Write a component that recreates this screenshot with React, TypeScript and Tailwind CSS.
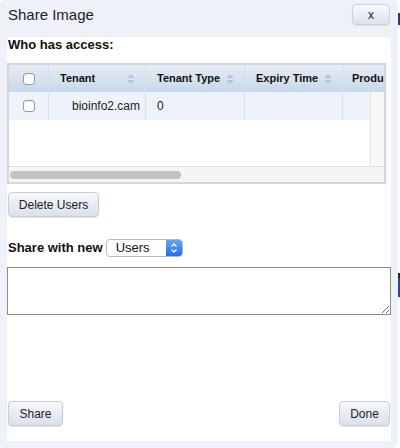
import React from 'react'

const COLUMNS = [
  { label: 'Tenant', width: 'w-[97px]', sort: true },
  { label: 'Tenant Type', width: 'w-[99px]', sort: true },
  { label: 'Expiry Time', width: 'w-[98px]', sort: true },
]

function SortIcon() {
  return (
    <svg width="8" height="10" viewBox="0 0 8 10" className="shrink-0">
      <path d="M4 0 L8 4 L0 4 Z" fill="#b9c5d2" />
      <path d="M0 6 L8 6 L4 10 Z" fill="#b9c5d2" />
    </svg>
  )
}

function Checkbox() {
  return <div className="w-[12px] h-[12px] rounded-[3px] border border-[#9a9a9a] bg-white shadow-[inset_0_1px_1px_rgba(0,0,0,0.08)]" />
}

function Btn({ children, className }: { children: React.ReactNode; className: string }) {
  return (
    <button
      className={
        'h-[25px] rounded-[4px] border border-[#c3cddb] bg-gradient-to-b from-[#f6f8fb] to-[#d9e1ec] text-[12px] text-[#222] shadow-[0_1px_1px_rgba(0,0,0,0.12)] flex items-center justify-center ' +
        className
      }
    >
      {children}
    </button>
  )
}

export default function App() {
  return (
    <div className="w-[400px] h-[448px] flex bg-white overflow-hidden" style={{ fontFamily: '"Liberation Sans", Arial, sans-serif' }}>
      <div className="w-[397px] h-[448px] bg-[#eef2f8] rounded-[4px] flex flex-col">
        {/* Header */}
        <div className="h-[37px] flex items-start pl-[8px] pr-[7px]">
          <div className="pt-[6px] text-[15px] leading-[18px] text-[#222]">Share Image</div>
          <button className="ml-auto mt-[4px] w-[38px] h-[21px] rounded-[4px] border border-[#c8d1de] bg-gradient-to-b from-[#f7f9fc] to-[#dde4ee] text-[12px] text-[#222] flex items-center justify-center shadow-[0_1px_1px_rgba(0,0,0,0.08)]">
            x
          </button>
        </div>

        {/* Content */}
        <div className="ml-[7px] w-[384px] h-[404px] bg-white flex flex-col">
          <div className="pl-[1px] text-[13px] leading-[16px] font-bold text-[#111]">Who has access:</div>

          {/* Grid */}
          <div className="mt-[10px] w-[379px] h-[121px] border-2 border-[#d6d6d6] flex flex-col">
            <div className="h-[27px] flex bg-gradient-to-b from-[#e6edf6] to-[#c6d8ea] overflow-hidden">
              <div className="w-[40px] shrink-0 flex items-center justify-center border-r border-[#d3dfec]">
                <Checkbox />
              </div>
              {COLUMNS.map((c) => (
                <div
                  key={c.label}
                  className={c.width + ' shrink-0 flex items-center pl-[11px] pr-[10px] border-r border-[#d3dfec] text-[11px] font-bold text-[#111] whitespace-nowrap'}
                >
                  <span>{c.label}</span>
                  {c.sort && (
                    <span className="ml-auto">
                      <SortIcon />
                    </span>
                  )}
                </div>
              ))}
              <div className="flex-1 flex items-center pl-[9px] text-[11px] font-bold text-[#111] whitespace-nowrap">Produ</div>
            </div>
            <div className="flex h-[74px]">
              <div className="w-[361px]">
                <div className="h-[28px] flex bg-[#eef3f9]">
                  <div className="w-[40px] shrink-0 flex items-center justify-center border-r border-[#d6e2ef]">
                    <Checkbox />
                  </div>
                  <div className="w-[97px] shrink-0 flex items-center pl-[23px] border-r border-[#d6e2ef] text-[12px] text-[#222]">bioinfo2.cam</div>
                  <div className="w-[99px] shrink-0 flex items-center pl-[11px] border-r border-[#d6e2ef] text-[12px] text-[#222]">0</div>
                  <div className="w-[98px] shrink-0 border-r border-[#d6e2ef]" />
                  <div className="flex-1" />
                </div>
              </div>
              <div className="w-[14px] bg-[#f7f7f7] border-l border-[#e4e4e4]" />
            </div>
            <div className="flex-1 bg-[#f5f5f5] border-t border-[#e2e2e2] flex items-center pl-[1px]">
              <div className="w-[171px] h-[8px] rounded-full bg-[#c1c1c1]" />
            </div>
          </div>

          <Btn className="mt-[8px] ml-[1px] w-[91px]">Delete Users</Btn>

          <div className="mt-[21px] ml-[1px] flex items-center h-[19px]">
            <span className="text-[13px] font-bold text-[#111]">Share with new</span>
            <div className="ml-[3px] w-[77px] h-[18px] rounded-[4px] border border-[#b9b9b9] bg-white flex items-center overflow-hidden">
              <span className="pl-[9px] text-[13px] text-[#111]">Users</span>
              <div className="ml-auto w-[16px] h-full bg-gradient-to-b from-[#5ea6fa] to-[#1c6ff0] flex items-center justify-center">
                <svg width="8" height="12" viewBox="0 0 8 12">
                  <path d="M1.5 4.5 L4 2 L6.5 4.5" stroke="white" strokeWidth="1.3" fill="none" />
                  <path d="M1.5 7.5 L4 10 L6.5 7.5" stroke="white" strokeWidth="1.3" fill="none" />
                </svg>
              </div>
            </div>
          </div>

          <textarea className="mt-[10px] w-[384px] h-[48px] border border-[#8d8d8d] bg-white outline-none" />

          <div className="mt-auto mb-[15px] flex justify-between pl-[1px] pr-[1px]">
            <Btn className="w-[55px]">Share</Btn>
            <Btn className="w-[51px]">Done</Btn>
          </div>
        </div>
      </div>

      {/* Edge of page behind the dialog */}
      <div className="w-[1px] bg-[#f4f6f9]" />
      <div className="w-[2px] flex flex-col">
        <div className="h-[13px]" />
        <div className="h-[12px] bg-[#1f3f7c]" />
        <div className="h-[248px]" />
        <div className="h-[5px] bg-[#3a1c22]" />
        <div className="h-[19px] bg-[#1f4a9c]" />
      </div>
    </div>
  )
}
